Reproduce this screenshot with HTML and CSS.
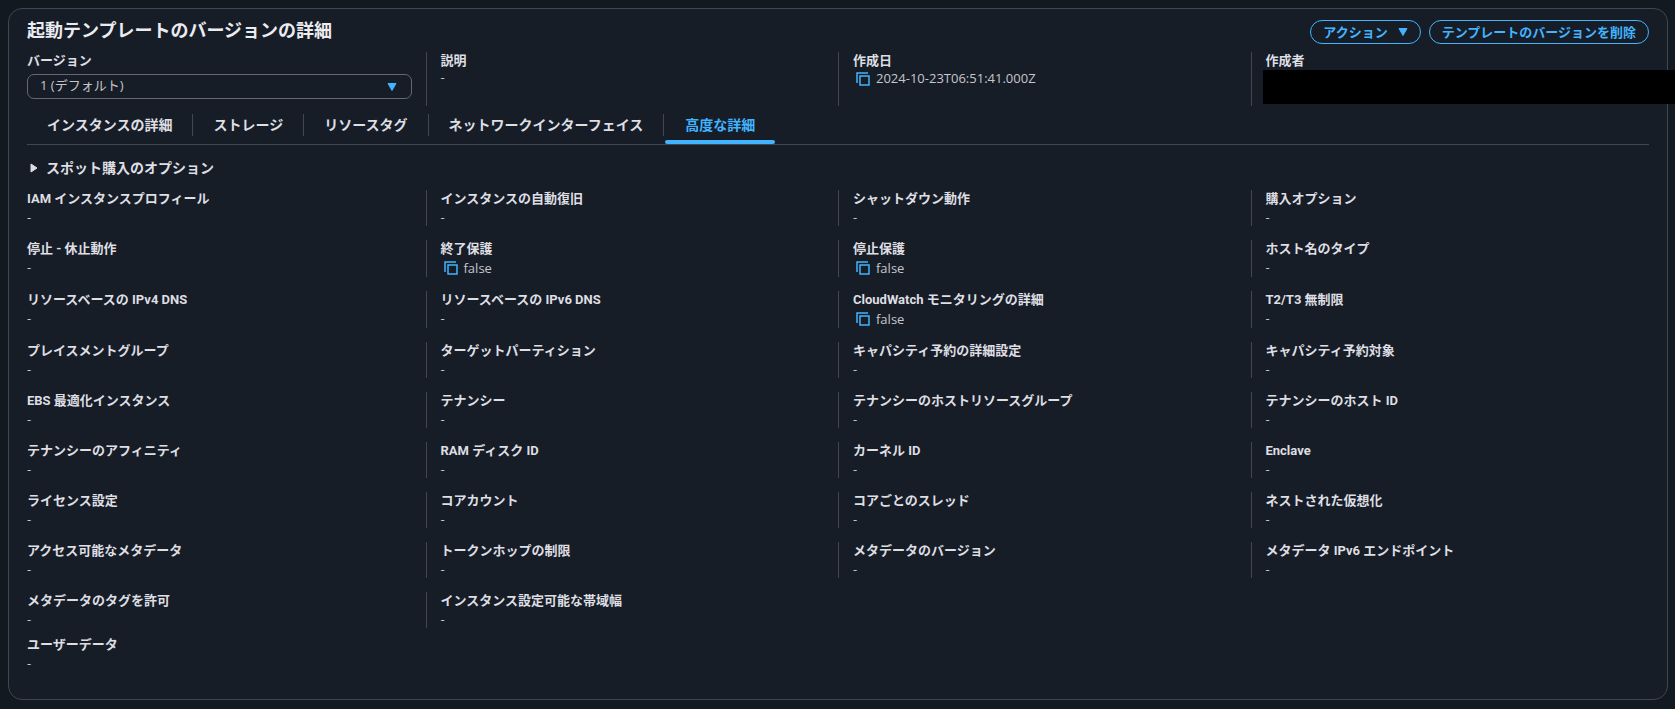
FILE: index.html
```
<!DOCTYPE html>
<html lang="ja">
<head>
  <meta charset="utf-8">
  <meta name="viewport" content="width=device-width, initial-scale=1.0">
  <title>起動テンプレートのバージョンの詳細</title>
  <link rel="stylesheet" href="styles.css">
</head>
<body>
  <!-- shared icons -->
  <svg class="sprite" aria-hidden="true">
    <symbol id="copy" viewBox="0 0 14 14">
      <path d="M1 11V1h11M4 4h9v9H4z" fill="none" stroke="currentColor" stroke-width="1.5"/>
    </symbol>
    <symbol id="caret" viewBox="0 0 10 8">
      <path d="M1 0.5h8L5 7.5z" fill="currentColor" stroke="currentColor" stroke-linejoin="round"/>
    </symbol>
  </svg>

  <main class="card">
    <header class="card-header">
      <h1>起動テンプレートのバージョンの詳細</h1>
      <div class="actions">
        <button class="btn" type="button">アクション <svg class="caret"><use href="#caret"/></svg></button>
        <button class="btn" type="button">テンプレートのバージョンを削除</button>
      </div>
    </header>

    <div class="grid summary">
      <div class="cell">
        <label class="name" for="version">バージョン</label>
        <div class="select">
          <select id="version">
            <option>1 (デフォルト)</option>
          </select>
          <svg class="caret"><use href="#caret"/></svg>
        </div>
      </div>
      <div class="cell"><div class="name">説明</div><div class="value">-</div></div>
      <div class="cell">
        <div class="name">作成日</div>
        <div class="value"><button class="copy" type="button" aria-label="コピー"><svg><use href="#copy"/></svg></button>2024-10-23T06:51:41.000Z</div>
      </div>
      <div class="cell"><div class="name">作成者</div><div class="masked"></div></div>
    </div>

    <nav class="tabs">
      <a href="#"><span>インスタンスの詳細</span></a>
      <a href="#"><span>ストレージ</span></a>
      <a href="#"><span>リソースタグ</span></a>
      <a href="#"><span>ネットワークインターフェイス</span></a>
      <a href="#" class="active" aria-current="page"><span>高度な詳細</span></a>
    </nav>

    <button class="expand" type="button" aria-expanded="false">
      <svg viewBox="0 0 8 10"><path d="M1 1v8l6-4z" fill="currentColor" stroke="currentColor" stroke-linejoin="round"/></svg>
      スポット購入のオプション
    </button>

    <div class="grid details">
      <div class="cell"><div class="name">IAM インスタンスプロフィール</div><div class="value">-</div></div>
      <div class="cell"><div class="name">インスタンスの自動復旧</div><div class="value">-</div></div>
      <div class="cell"><div class="name">シャットダウン動作</div><div class="value">-</div></div>
      <div class="cell"><div class="name">購入オプション</div><div class="value">-</div></div>

      <div class="cell"><div class="name">停止 - 休止動作</div><div class="value">-</div></div>
      <div class="cell">
        <div class="name">終了保護</div>
        <div class="value"><button class="copy" type="button" aria-label="コピー"><svg><use href="#copy"/></svg></button>false</div>
      </div>
      <div class="cell">
        <div class="name">停止保護</div>
        <div class="value"><button class="copy" type="button" aria-label="コピー"><svg><use href="#copy"/></svg></button>false</div>
      </div>
      <div class="cell"><div class="name">ホスト名のタイプ</div><div class="value">-</div></div>

      <div class="cell"><div class="name">リソースベースの IPv4 DNS</div><div class="value">-</div></div>
      <div class="cell"><div class="name">リソースベースの IPv6 DNS</div><div class="value">-</div></div>
      <div class="cell">
        <div class="name">CloudWatch モニタリングの詳細</div>
        <div class="value"><button class="copy" type="button" aria-label="コピー"><svg><use href="#copy"/></svg></button>false</div>
      </div>
      <div class="cell"><div class="name">T2/T3 無制限</div><div class="value">-</div></div>

      <div class="cell"><div class="name">プレイスメントグループ</div><div class="value">-</div></div>
      <div class="cell"><div class="name">ターゲットパーティション</div><div class="value">-</div></div>
      <div class="cell"><div class="name">キャパシティ予約の詳細設定</div><div class="value">-</div></div>
      <div class="cell"><div class="name">キャパシティ予約対象</div><div class="value">-</div></div>

      <div class="cell"><div class="name">EBS 最適化インスタンス</div><div class="value">-</div></div>
      <div class="cell"><div class="name">テナンシー</div><div class="value">-</div></div>
      <div class="cell"><div class="name">テナンシーのホストリソースグループ</div><div class="value">-</div></div>
      <div class="cell"><div class="name">テナンシーのホスト ID</div><div class="value">-</div></div>

      <div class="cell"><div class="name">テナンシーのアフィニティ</div><div class="value">-</div></div>
      <div class="cell"><div class="name">RAM ディスク ID</div><div class="value">-</div></div>
      <div class="cell"><div class="name">カーネル ID</div><div class="value">-</div></div>
      <div class="cell"><div class="name">Enclave</div><div class="value">-</div></div>

      <div class="cell"><div class="name">ライセンス設定</div><div class="value">-</div></div>
      <div class="cell"><div class="name">コアカウント</div><div class="value">-</div></div>
      <div class="cell"><div class="name">コアごとのスレッド</div><div class="value">-</div></div>
      <div class="cell"><div class="name">ネストされた仮想化</div><div class="value">-</div></div>

      <div class="cell"><div class="name">アクセス可能なメタデータ</div><div class="value">-</div></div>
      <div class="cell"><div class="name">トークンホップの制限</div><div class="value">-</div></div>
      <div class="cell"><div class="name">メタデータのバージョン</div><div class="value">-</div></div>
      <div class="cell"><div class="name">メタデータ IPv6 エンドポイント</div><div class="value">-</div></div>

      <div class="cell"><div class="name">メタデータのタグを許可</div><div class="value">-</div></div>
      <div class="cell"><div class="name">インスタンス設定可能な帯域幅</div><div class="value">-</div></div>
    </div>

    <div class="user-data">
      <div class="name">ユーザーデータ</div>
      <div class="value">-</div>
    </div>
  </main>
</body>
</html>
```

FILE: styles.css
```
* { box-sizing: border-box; }
body { margin: 0; padding: 8px 7px 8px 8px; background: #131920; color: #dedee3; font-family: "Open Sans", "Noto Sans CJK JP", sans-serif; font-size: 13px; line-height: 18px; }
button, select { font: inherit; color: inherit; background: none; border: none; margin: 0; padding: 0; cursor: pointer; }
svg { display: block; }
.sprite { position: absolute; width: 0; height: 0; }

.card { background: #161d26; border: 1px solid #424650; border-radius: 14px; padding: 11px 18px 27px 18px; }
.card-header { display: flex; justify-content: space-between; align-items: flex-start; margin-bottom: 8px; }
.card-header h1 { margin: 0; font-size: 18px; line-height: 20px; font-weight: bold; color: #ebebf0; }

.actions { display: flex; gap: 8px; }
.btn { display: flex; align-items: center; gap: 10px; height: 24px; padding: 0 12px; border: 1px solid #42b4ff; border-radius: 12px; color: #42b4ff; font-weight: bold; line-height: 20px; }
.caret { width: 10px; height: 8px; color: #42b4ff; }

/* four columns, a divider in the middle of each gap */
.grid { display: grid; grid-template-columns: repeat(4, minmax(0, 1fr)); gap: 14px 28px; }
.cell { position: relative; }
.cell:not(:nth-child(4n+1)) { margin-left: -14px; padding-left: 14px; border-left: 1px solid #424650; }
.name { display: block; font-family: Roboto, "Noto Sans CJK JP", sans-serif; font-weight: bold; }
.value { display: flex; align-items: center; color: #c6c6cd; }
.copy { padding: 3px 6px 2px 3px; color: #42b4ff; }
.copy svg { width: 14px; height: 14px; }

.summary { line-height: 17px; }
.summary .cell { min-height: 54px; }
.select { display: flex; align-items: center; margin-top: 5px; border: 1px solid #656871; border-radius: 7px; }
.select select { flex: 1; height: 23px; padding: 0 12px 2px; appearance: none; color: #c6c6cd; }
.select .caret { margin-right: 14px; pointer-events: none; }
.masked { position: absolute; top: 18px; left: 11px; right: -26px; height: 34px; background: #000; }

.tabs { display: flex; padding-top: 8px; border-bottom: 1px solid #424650; }
.tabs a { padding-bottom: 8px; color: #dedee3; font-size: 14px; font-weight: bold; text-decoration: none; }
.tabs span { display: block; padding: 0 20px; line-height: 22px; border-right: 1px solid #424650; }
.tabs .active { margin-left: 1px; padding-bottom: 0; color: #42b4ff; }
.tabs .active span { border-right: none; }
.tabs .active::after { content: ""; display: block; height: 4px; margin-top: 4px; border-radius: 2px; background: #42b4ff; }

.expand { display: flex; align-items: center; gap: 8px; margin: 12px 0 11px; padding-left: 3px; font-size: 14px; line-height: 22px; font-weight: bold; }
.expand svg { width: 8px; height: 10px; }

.user-data { margin-top: 8px; }
```
